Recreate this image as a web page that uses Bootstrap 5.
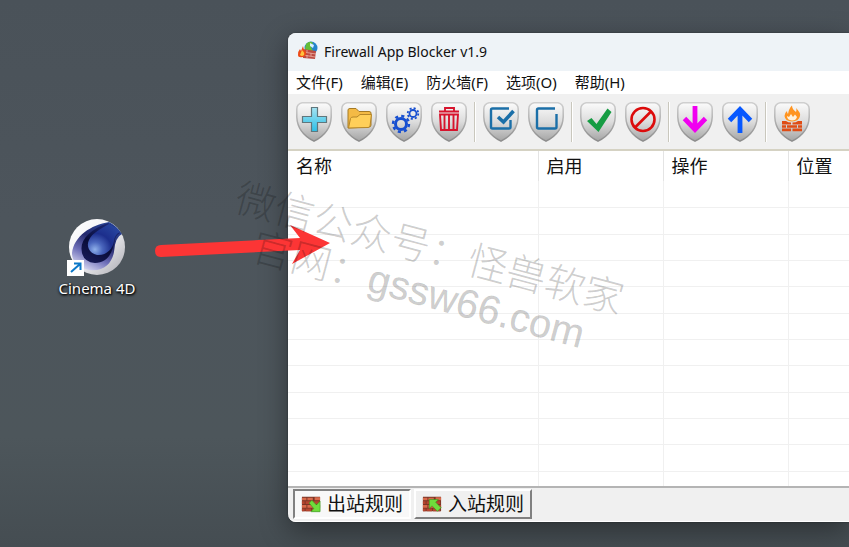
<!DOCTYPE html>
<html lang="zh-CN">
<head>
<meta charset="utf-8">
<meta name="viewport" content="width=device-width, initial-scale=1">
<title>Firewall App Blocker v1.9</title>
<link href="https://cdn.jsdelivr.net/npm/bootstrap@5.3.0/dist/css/bootstrap.min.css" rel="stylesheet">
<style>
  body { font-family: "Noto Sans", "Noto Sans CJK SC", sans-serif; color: #111; }
  .desktop { min-height: 100vh; background: linear-gradient(#4a5259, #4d555c 40%, #4d565b 80%, #454d52); }
  .desk-icon { left: 42px; top: 218px; width: 110px; color: #fff; font-size: 15px; line-height: 20px; text-shadow: 1px 1px 2px #000, 0 1px 3px #000; }
  .desk-icon svg { width: 60px; height: 60px; }
  .app-window { left: 288px; right: 0; top: 33px; bottom: 25px; background: #f0f0f0; border-radius: 8px 0 0 8px; box-shadow: 0 8px 28px rgba(0,0,0,.4), 0 0 2px rgba(0,0,0,.4); }
  .title-bar { height: 38px; padding-left: 10px; padding-bottom: 2px; gap: 6px; background: #eef3f7; font-size: 14px; border-top-left-radius: 8px; }
  .title-bar svg { width: 20px; height: 20px; }
  .menu-bar { height: 23px; padding-left: 8px; gap: 18px; background: #fff; font-size: 15px; line-height: 23px; }
  .menu-bar button { color: inherit; }
  .tool-bar { padding: 8px 8px 7px; gap: 9px; border-bottom: 2px solid #d5d2c3; }
  .tool-bar svg { width: 36px; height: 40px; }
  .tool-sep { width: 2px; height: 40px; margin: 0 -2px; border-left: 1px solid #c9c7bd; border-right: 1px solid #fff; }
  .list-area { flex: 1 1 0; background: #fff; border-bottom: 2px solid #b4b4b4; }
  .rule-table { table-layout: fixed; font-size: 18px; line-height: 28px; }
  .rule-table th { height: 30px; padding: 0 0 0 8px; font-weight: 400; border-right: 1px solid #e4e4e4; }
  .rule-table td { height: 26px; padding: 0; border-right: 1px solid #f0f0f0; border-bottom: 1px solid #f0f0f0; }
  .rule-table tr:nth-child(3n+2) td { height: 27px; }
  .rule-table th:last-child, .rule-table td:last-child { border-right: 0; }
  .c-name { width: 250px; }
  .c-mid { width: 125px; }
  .tab-bar { padding: 1px 5px 2px; gap: 3px; border-bottom: 1px solid #fff; border-radius: 0 0 0 8px; }
  .rule-tab { width: 118px; height: 30px; gap: 6px; padding: 0 6px; font-size: 19px; line-height: 26px; color: #111; background: #f0f0f0; border: 2px solid; border-color: #fff #808080 #808080 #fff; white-space: nowrap; }
  .rule-tab.current { background: #f8f8f8; border-color: #808080 #fff #fff #808080; }
  .rule-tab svg { width: 22px; height: 18px; }
  .arrow-layer { left: 150px; top: 218px; width: 190px; height: 54px; }
  .watermark { left: 224px; top: 227px; width: 400px; font: 300 40px/43px "Liberation Sans", "Noto Sans CJK SC", sans-serif; color: rgba(0,0,0,.2); transform: rotate(15deg); pointer-events: none; }
  .watermark .site { -webkit-text-stroke: 1px rgba(0,0,0,.06); }
</style>
<script src="https://cdn.jsdelivr.net/npm/bootstrap@5.3.0/dist/js/bootstrap.bundle.min.js"></script>
</head>
<body>
<svg width="0" height="0" class="position-absolute" aria-hidden="true">
  <defs>
    <linearGradient id="gShield" x1="0" y1="0" x2="0" y2="1"><stop offset="0" stop-color="#fbfbfb"/><stop offset=".5" stop-color="#dcdcdc"/><stop offset="1" stop-color="#a4a4a4"/></linearGradient>
    <linearGradient id="gEdge" x1="0" y1="0" x2="0" y2="1"><stop offset="0" stop-color="#cfcfcf"/><stop offset="1" stop-color="#8c8c8c"/></linearGradient>
    <linearGradient id="gPlus" x1="0" y1="0" x2="0" y2="1"><stop offset="0" stop-color="#a5e3f2"/><stop offset="1" stop-color="#2cbfe6"/></linearGradient>
    <symbol id="shield" viewBox="0 0 36 40"><path d="M6 .8H30Q35.200 2 35.200 7V15Q34.500 31 18 39.200Q1.500 31 .8 15V7Q.8 2 6 .8Z" fill="url(#gShield)" stroke="url(#gEdge)" stroke-width="1.500"/></symbol>
    <symbol id="bricks" viewBox="0 0 22 18"><path fill="#7a3526" d="M1 1H21V17H1Z"/><path fill="#d8694a" d="M1 2h5v3H1zM7 2h6v3H7zM15 1.500h6v3.500h-6zM1 10h5v3H1zM7 10h7v3H7z"/><path fill="#b5452f" d="M1 6h3v3H1zM5 6h6v3H5zM12 6h8v3h-8zM1 14h3v3H1zM5 14h6v3H5zM12 14h8v3h-8zM15 10h6v3h-6z"/></symbol>
  </defs>
</svg>
<main class="desktop position-relative overflow-hidden">
  <a href="#" class="desk-icon position-absolute d-flex flex-column align-items-center text-decoration-none">
    <svg viewBox="0 0 60 60" aria-hidden="true">
      <defs>
        <linearGradient id="cSilver" x1="0" y1="0" x2="1" y2="1"><stop offset="0" stop-color="#fff"/><stop offset=".5" stop-color="#f1f1f4"/><stop offset="1" stop-color="#a9a9b0"/></linearGradient>
        <linearGradient id="cBlue" x1=".75" y1="0" x2=".25" y2="1"><stop offset="0" stop-color="#2c4a9c"/><stop offset=".4" stop-color="#23286c"/><stop offset=".7" stop-color="#6d6eb8"/><stop offset="1" stop-color="#dcdcf4"/></linearGradient>
        <linearGradient id="cDark" x1=".8" y1="0" x2=".3" y2="1"><stop offset="0" stop-color="#1d2b7c"/><stop offset=".6" stop-color="#090c38"/><stop offset="1" stop-color="#171a55"/></linearGradient>
        <radialGradient id="cDrop" cx=".22" cy=".82" r=".95"><stop offset="0" stop-color="#8fb0ea"/><stop offset=".25" stop-color="#4a66bd"/><stop offset=".55" stop-color="#1c2e8c"/><stop offset="1" stop-color="#27459f"/></radialGradient>
      </defs>
      <circle cx="30" cy="29" r="28" fill="url(#cSilver)"/>
      <path fill="url(#cBlue)" d="M42 4C24 7 7 18 5 35Q5 48 22 52C37 54 45 45 47 34Q48 19 55 16Q50 8 42 4Z"/>
      <path fill="url(#cDark)" d="M41 5C24 11 14 21 14.500 31Q15 44 28 45C41 45 46 34 48 21Q49 17 53 15L47 8Z"/>
      <path fill="url(#cDrop)" d="M42 6C35 10 25 15 22 22C19 28 22 35 30 37C39 38 46 31 47 23Q48 16 53 14Q48 8 42 6Z"/>
      <path fill="#fff" d="M0 42H17V58H0Z"/>
      <path fill="none" stroke="#0b78c8" stroke-width="2" d="M4 54L13 46M7 45.500H13.500V52"/>
    </svg>
    <span>Cinema 4D</span>
  </a>

  <section class="app-window position-absolute d-flex flex-column">
    <header class="title-bar d-flex align-items-center">
      <svg viewBox="0 0 20 20" aria-hidden="true">
        <circle cx="13" cy="7" r="6.500" fill="#2484cc"/><path fill="#66bd35" d="M8 3Q12-1 15 2L13 6L15 10L10 12L7 8Z"/><path fill="#d8f0ff" d="M12 2L16 4L15 7L12 5Z"/>
        <path fill="#bd4b42" d="M5 8L18 10L17 18L5 17Z"/><path stroke="#edb1a5" stroke-width=".8" fill="none" d="M5 11L18 13M5 14L17 16M9 9V11M13 12V15M9 14V17"/>
        <path fill="#ed4b18" d="M0 14Q0 10 2 8L3 10L5 5Q5 8 8 11Q9 15 5 16Q0 17 0 14Z"/><path fill="#ffc33d" d="M2 14L4 9Q7 12 6 14Q4 16 2 14Z"/>
      </svg>
      <span>Firewall App Blocker v1.9</span>
    </header>
    <nav class="menu-bar d-flex" aria-label="菜单">
      <button class="border-0 bg-transparent p-0">文件(F)</button>
      <button class="border-0 bg-transparent p-0">编辑(E)</button>
      <button class="border-0 bg-transparent p-0">防火墙(F)</button>
      <button class="border-0 bg-transparent p-0">选项(O)</button>
      <button class="border-0 bg-transparent p-0">帮助(H)</button>
    </nav>
    <div class="tool-bar d-flex flex-shrink-0" role="toolbar" aria-label="工具">
      <button class="border-0 bg-transparent p-0 d-flex" aria-label="添加"><svg viewBox="0 0 36 40"><use href="#shield"/><path fill="url(#gPlus)" stroke="#60777d" stroke-width="1.200" d="M15.500 5.500H21.500V14.500H30.500V20.500H21.500V29.500H15.500V20.500H6.500V14.500H15.500Z"/></svg></button>
      <button class="border-0 bg-transparent p-0 d-flex" aria-label="文件夹"><svg viewBox="0 0 36 40"><use href="#shield"/><path fill="#f4ba45" stroke="#a57a24" stroke-width="1" stroke-linejoin="round" d="M7 26V8Q7 6.500 9 6.500H15L18 9.500H28Q30 9.500 30 11V23Q30 25 28 25Z"/><path fill="#ffcf59" stroke="#b58629" stroke-width="1" stroke-linejoin="round" d="M7.500 26L9.500 16.500Q10 15 12 15H16L19 12.500H30.500L29 24Q28.500 25.500 27 25.500Z"/></svg></button>
      <button class="border-0 bg-transparent p-0 d-flex" aria-label="设置"><svg viewBox="0 0 36 40"><use href="#shield"/><g fill="none" stroke="#174fd0"><circle cx="15" cy="22" r="5.500" stroke-width="3"/><circle cx="15" cy="22" r="8" stroke-width="2.400" stroke-dasharray="3.140 3.140"/><circle cx="27" cy="11.500" r="3.500" stroke-width="1.800"/><circle cx="27" cy="11.500" r="5.300" stroke-width="1.800" stroke-dasharray="2.080 2.080"/></g></svg></button>
      <button class="border-0 bg-transparent p-0 d-flex" aria-label="删除"><svg viewBox="0 0 36 40"><use href="#shield"/><path fill="none" stroke="#d7142d" stroke-width="1.900" d="M8 9.500H28M14 9V6H23V9M9 12.500H27L26 28H10ZM13.500 13V28M18 13V28M22.500 13V28"/></svg></button>
      <span class="tool-sep"></span>
      <button class="border-0 bg-transparent p-0 d-flex" aria-label="全选"><svg viewBox="0 0 36 40"><use href="#shield"/><path fill="none" stroke="#1b6fa8" stroke-width="2.400" d="M26 6.500H9.500Q8 6.500 8 8V25Q8 26.500 9.500 26.500H26Q27.500 26.500 27.500 25V18"/><path fill="none" stroke="#1b6fa8" stroke-width="3.600" d="M15 15L20.500 20L30.500 9"/></svg></button>
      <button class="border-0 bg-transparent p-0 d-flex" aria-label="取消全选"><svg viewBox="0 0 36 40"><use href="#shield"/><path fill="none" stroke="#1b6fa8" stroke-width="2.400" d="M27 6.500H10.500Q9 6.500 9 8V25Q9 26.500 10.500 26.500H27Q28.500 26.500 28.500 25V12"/></svg></button>
      <span class="tool-sep"></span>
      <button class="border-0 bg-transparent p-0 d-flex" aria-label="启用"><svg viewBox="0 0 36 40"><use href="#shield"/><path fill="#169c43" d="M7 19L11.500 16L16.500 22L27.500 6.500L31.500 10L18.500 30Z"/></svg></button>
      <button class="border-0 bg-transparent p-0 d-flex" aria-label="禁用"><svg viewBox="0 0 36 40"><use href="#shield"/><g fill="none" stroke="#dc0b0b" stroke-width="2.600"><circle cx="18" cy="17.500" r="11.500"/><path d="M10 25.500L26 9.500"/></g></svg></button>
      <span class="tool-sep"></span>
      <button class="border-0 bg-transparent p-0 d-flex" aria-label="下移"><svg viewBox="0 0 36 40"><use href="#shield"/><path fill="none" stroke="#f000f0" stroke-width="4.800" d="M18 4V28M7.500 16.500L18 27.500L28.500 16.500"/></svg></button>
      <button class="border-0 bg-transparent p-0 d-flex" aria-label="上移"><svg viewBox="0 0 36 40"><use href="#shield"/><path fill="none" stroke="#0758ff" stroke-width="4.800" d="M18 31V7M7.500 18.500L18 7.500L28.500 18.500"/></svg></button>
      <span class="tool-sep"></span>
      <button class="border-0 bg-transparent p-0 d-flex" aria-label="防火墙"><svg viewBox="0 0 36 40"><use href="#shield"/><path fill="#ff9420" d="M18 3.500Q18 7 22 10Q23 8 22 6Q27 11 26 14Q25 19 18 19.500Q11 19 10.500 14Q10.500 11 13 9Q13 11 14 12Q15 6 18 3.500Z"/><path fill="#fff1dc" d="M13 14L15 15L17 12L19 15L21 12.500L23 15Q22 18.500 18 18.500Q13 18 13 14Z"/><path fill="#e04c14" d="M8 19H12Q14 20.500 17 20.500V22.500H8ZM28 19H24Q22 20.500 18.500 20.500V22.500H28ZM8 23.300H12V25.800H8ZM13 23.300H23V25.800H13ZM24 23.300H28V25.800H24ZM8 26.600H17V29.200H8ZM18.500 26.600H28V29.200H18.500Z"/></svg></button>
    </div>
    <div class="list-area overflow-hidden">
      <table class="rule-table w-100">
        <thead><tr><th scope="col" class="c-name">名称</th><th scope="col" class="c-mid">启用</th><th scope="col" class="c-mid">操作</th><th scope="col">位置</th></tr></thead>
        <tbody>
          <tr><td></td><td></td><td></td><td></td></tr><tr><td></td><td></td><td></td><td></td></tr>
          <tr><td></td><td></td><td></td><td></td></tr><tr><td></td><td></td><td></td><td></td></tr>
          <tr><td></td><td></td><td></td><td></td></tr><tr><td></td><td></td><td></td><td></td></tr>
          <tr><td></td><td></td><td></td><td></td></tr><tr><td></td><td></td><td></td><td></td></tr>
          <tr><td></td><td></td><td></td><td></td></tr><tr><td></td><td></td><td></td><td></td></tr>
          <tr><td></td><td></td><td></td><td></td></tr><tr><td></td><td></td><td></td><td></td></tr>
        </tbody>
      </table>
    </div>
    <div class="tab-bar d-flex">
      <button class="rule-tab current d-flex align-items-center"><svg viewBox="0 0 22 18" aria-hidden="true"><use href="#bricks"/><path fill="#6fdc3c" stroke="#2c9a1c" stroke-width=".6" d="M9 8L12 5L17 10L21 6V17.500H11L14 14Z"/></svg><span>出站规则</span></button>
      <button class="rule-tab d-flex align-items-center"><svg viewBox="0 0 22 18" aria-hidden="true"><use href="#bricks"/><path fill="#6fdc3c" stroke="#2c9a1c" stroke-width=".6" d="M8 4H18L15 7L21 13L17 17L11 11L8 14Z"/></svg><span>入站规则</span></button>
    </div>
  </section>

  <svg class="arrow-layer position-absolute" viewBox="0 0 190 54" aria-hidden="true"><path fill="#fc3535" d="M11 27L150 20L140 7L180 25L142 46L150 32L11 39Q5 39 5 33Q5 27 11 27Z"/></svg>
  <div class="watermark position-absolute text-center text-nowrap">微信公众号：怪兽软家<br>官网：<span class="site">gssw66.com</span></div>
</main>
</body>
</html>
